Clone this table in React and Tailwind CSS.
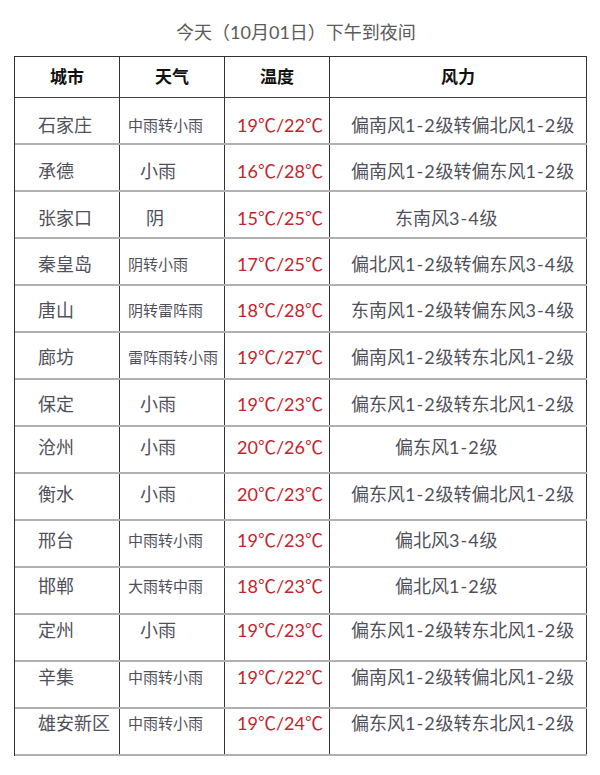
import React from "react";

const rows = [
  { city: "石家庄", w: "中雨转小雨", ws: "s", t: "19℃/22℃", wind: "偏南风1-2级转偏北风1-2级", pt: "pt-[15px]" },
  { city: "承德", w: "小雨", ws: "l", t: "16℃/28℃", wind: "偏南风1-2级转偏东风1-2级", pt: "pt-[14px]" },
  { city: "张家口", w: "阴", ws: "one", t: "15℃/25℃", wind: "东南风3-4级", short: true, pt: "pt-[14px]" },
  { city: "秦皇岛", w: "阴转小雨", ws: "s", t: "17℃/25℃", wind: "偏北风1-2级转偏东风3-4级", pt: "pt-[13px]" },
  { city: "唐山", w: "阴转雷阵雨", ws: "s", t: "18℃/28℃", wind: "东南风1-2级转偏东风3-4级", pt: "pt-[12px]" },
  { city: "廊坊", w: "雷阵雨转小雨", ws: "s", t: "19℃/27℃", wind: "偏南风1-2级转东北风1-2级", pt: "pt-[12px]" },
  { city: "保定", w: "小雨", ws: "l", t: "19℃/23℃", wind: "偏东风1-2级转东北风1-2级", pt: "pt-[12px]" },
  { city: "沧州", w: "小雨", ws: "l", t: "20℃/26℃", wind: "偏东风1-2级", short: true, pt: "pt-[8px]" },
  { city: "衡水", w: "小雨", ws: "l", t: "20℃/23℃", wind: "偏东风1-2级转偏北风1-2级", pt: "pt-[8px]" },
  { city: "邢台", w: "中雨转小雨", ws: "s", t: "19℃/23℃", wind: "偏北风3-4级", short: true, pt: "pt-[7px]" },
  { city: "邯郸", w: "大雨转中雨", ws: "s", t: "18℃/23℃", wind: "偏北风1-2级", short: true, pt: "pt-[6px]" },
  { city: "定州", w: "小雨", ws: "l", t: "19℃/23℃", wind: "偏东风1-2级转东北风1-2级", pt: "pt-[3px]" },
  { city: "辛集", w: "中雨转小雨", ws: "s", t: "19℃/22℃", wind: "偏南风1-2级转偏北风1-2级", pt: "pt-[3px]" },
  { city: "雄安新区", w: "中雨转小雨", ws: "s", t: "19℃/24℃", wind: "偏东风1-2级转东北风1-2级", pt: "pt-[2px]" },
];

function Mixed({ text }) {
  const parts = text.split(/([0-9\-]+)/).filter(Boolean);
  return (
    <>
      {parts.map((p, i) =>
        /^[0-9\-]+$/.test(p) ? (
          <span key={i} className="tracking-[1px]">
            {p}
          </span>
        ) : (
          <span key={i}>{p}</span>
        )
      )}
    </>
  );
}

export default function App() {
  return (
    <div className="w-[600px] h-[775px] bg-white overflow-hidden font-['Lato','Noto_Sans_CJK_SC',sans-serif]">
      <div className="h-[56px] pt-[20px] pr-[8px] text-center text-[18px] leading-[24px] text-[#5a5a5a]">
        今天（10月01日）下午到夜间
      </div>
      <div className="ml-[14px] w-[573px] border-l border-t border-[#333]">
        <div className="grid grid-cols-[105px_105px_105px_257px] h-[41px] border-b border-[#444] text-[17px] font-semibold text-[#111]">
          <div className="border-r border-[#333] flex items-center justify-center">城市</div>
          <div className="border-r border-[#333] flex items-center justify-center">天气</div>
          <div className="border-r border-[#333] flex items-center justify-center">温度</div>
          <div className="border-r border-[#333] flex items-center justify-center">风力</div>
        </div>
        {rows.map((r, i) => (
          <div
            key={i}
            className="grid grid-cols-[105px_105px_105px_257px] h-[47px] border-b-2 border-[#b0b0b0] leading-[24px] text-[#50505a]"
          >
            <div className={`border-r border-[#333] pl-[23px] text-[18px] whitespace-nowrap ${r.pt}`}>{r.city}</div>
            <div
              className={`border-r border-[#333] whitespace-nowrap ${r.pt} ${
                r.ws === "s" ? "pl-[8px] text-[15px]" : r.ws === "l" ? "pl-[20px] text-[18px]" : "pl-[26px] text-[18px]"
              }`}
            >
              {r.w}
            </div>
            <div className={`border-r border-[#333] pl-[12px] text-[18px] text-[#c4232b] whitespace-nowrap ${r.pt}`}>
              {r.t}
            </div>
            <div
              className={`border-r border-[#333] text-[18px] whitespace-nowrap ${r.pt} ${
                r.short ? "pl-[65px]" : "pl-[21px]"
              }`}
            >
              <Mixed text={r.wind} />
            </div>
          </div>
        ))}
      </div>
    </div>
  );
}
